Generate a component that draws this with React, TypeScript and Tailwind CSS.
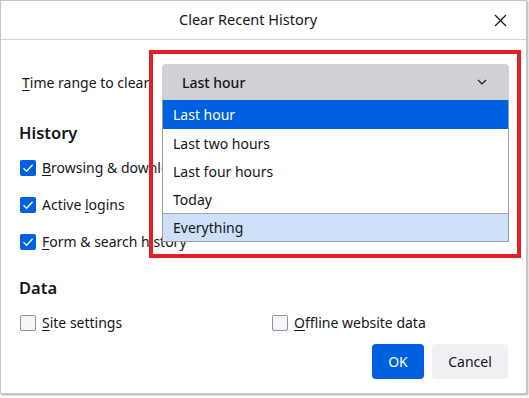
import React from "react";

type CheckRowProps = {
  checked: boolean;
  accessKey: string;
  rest: string;
  prefix?: string;
};

function Check({ checked }: { checked: boolean }) {
  if (checked) {
    return (
      <span className="flex h-[16px] w-[16px] items-center justify-center rounded-[2px] bg-[#0061e0]">
        <svg width="12" height="12" viewBox="0 0 12 12" fill="none">
          <path d="M1.5 6.2 L4.6 9.2 L10.6 2.8" stroke="white" strokeWidth="1.3" />
        </svg>
      </span>
    );
  }
  return <span className="h-[16px] w-[16px] rounded-[2px] border border-[#8f8f9d] bg-[#f6f6f8]" />;
}

function CheckRow({ checked, accessKey, rest, prefix = "" }: CheckRowProps) {
  return (
    <div className="flex h-[37px] items-center gap-[6px]">
      <Check checked={checked} />
      <span className="whitespace-nowrap">
        {prefix}
        <span className="underline underline-offset-2">{accessKey}</span>
        {rest}
      </span>
    </div>
  );
}

export default function App() {
  const options = ["Last two hours", "Last four hours", "Today"];

  return (
    <div className="relative h-[398px] w-[529px] overflow-hidden bg-white font-['Noto_Sans',sans-serif] text-[14px] text-[#15141a]">
      <div className="flex h-[394px] w-[527px] flex-col border border-[#c6c6c6] bg-white shadow-[1px_1px_2px_rgba(0,0,0,0.35)]">
        <header className="flex h-[39px] shrink-0 items-center border-b border-[#d4d4d4] pl-[178px] pr-[19px]">
          <span className="flex-1 text-[14.5px]">Clear Recent History</span>
          <svg width="13" height="13" viewBox="0 0 13 13">
            <path d="M1 1 L12 12 M12 1 L1 12" stroke="#15141a" strokeWidth="1.2" />
          </svg>
        </header>

        <div className="flex flex-1 flex-col pl-[18px] pr-[17px]">
          <div className="mt-[24px] flex h-[36px] items-center justify-between">
            <span className="ml-[3px] whitespace-nowrap">
              <span className="underline underline-offset-2">T</span>ime range to clear
            </span>
            <div className="relative w-[347px]">
              <div className="flex h-[36px] items-center justify-between rounded-t-[4px] bg-[#d0d0d7] pl-[20px] pr-[22px] font-medium">
                <span>Last hour</span>
                <svg width="10" height="6" viewBox="0 0 10 6" fill="none">
                  <path d="M1 1 L5 5 L9 1" stroke="#15141a" strokeWidth="1.2" />
                </svg>
              </div>
              <div className="absolute left-0 top-full z-10 w-full border-x border-b border-[#9d9da6] bg-white">
                <div className="flex h-[29px] items-center bg-[#0061e0] pl-[10px] text-white">Last hour</div>
                {options.map((o) => (
                  <div key={o} className="flex h-[28px] items-center pl-[10px]">
                    {o}
                  </div>
                ))}
                <div className="flex h-[28px] items-center border-t border-[#a6a6ad] bg-[#cde0f7] pl-[10px]">
                  Everything
                </div>
              </div>
            </div>
          </div>

          <h2 className="mt-[21px] h-[24px] text-[16.5px] leading-[24px] font-semibold">History</h2>
          <div className="mt-[4px] flex flex-col pl-[1px]">
            <CheckRow checked accessKey="B" rest="rowsing & downloads" />
            <CheckRow checked prefix="Active " accessKey="l" rest="ogins" />
            <CheckRow checked accessKey="F" rest="orm & search history" />
          </div>

          <h2 className="mt-[16px] h-[24px] text-[16.5px] leading-[24px] font-semibold">Data</h2>
          <div className="mt-[4px] grid grid-cols-[252px_1fr] pl-[1px]">
            <CheckRow checked={false} accessKey="S" rest="ite settings" />
            <CheckRow checked={false} accessKey="O" rest="ffline website data" />
          </div>

          <div className="mt-[3px] flex justify-end gap-[8px] pr-[1px]">
            <button className="h-[35px] w-[52px] rounded-[4px] bg-[#0061e0] text-white">OK</button>
            <button className="h-[35px] w-[76px] rounded-[4px] bg-[#f0f0f4]">Cancel</button>
          </div>
        </div>
      </div>

      <div className="pointer-events-none absolute left-[149px] top-[50px] h-[208px] w-[372px] border-4 border-[#e31e25]" />
    </div>
  );
}
